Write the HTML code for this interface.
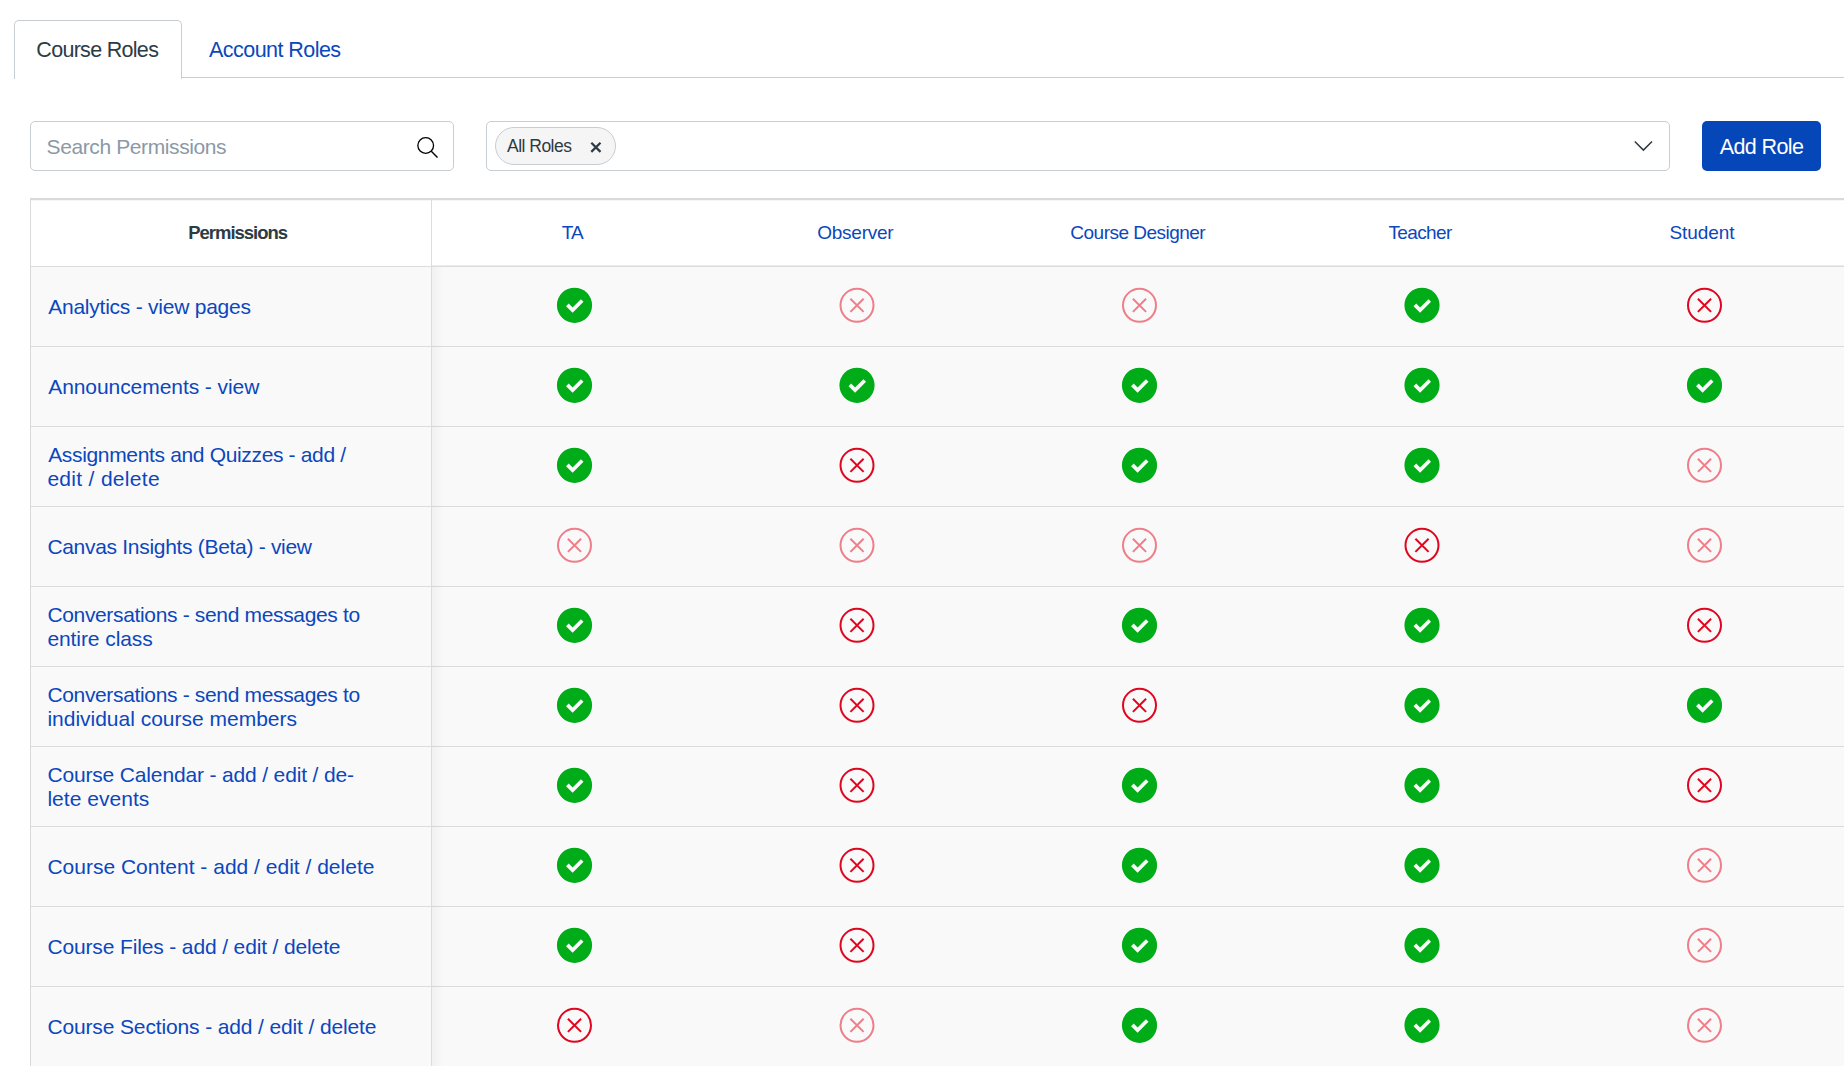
<!DOCTYPE html><html><head><meta charset="utf-8"><style>
*{box-sizing:border-box;margin:0;padding:0}
html,body{width:1844px;height:1066px;overflow:hidden;background:#fff}
body{font-family:"Liberation Sans",sans-serif;color:#2d3b45;position:relative}
.abs{position:absolute}
.tabline{left:181px;top:77px;width:1663px;height:1px;background:#c7cdd1}
.tab{left:14px;top:20px;width:168px;height:59px;border:1px solid #c7cdd1;border-bottom:none;border-radius:5px 5px 0 0;background:#fff}
.t{position:absolute;white-space:nowrap;line-height:1}
.blue{color:#0b47bd}
.box{border:1px solid #c7cdd1;border-radius:5px;background:#fff}
.tag{left:495px;top:127px;width:121px;height:38px;border:1px solid #c7cdd1;border-radius:19px;background:#f5f5f5}
.btn{left:1702px;top:121px;width:119px;height:50px;border-radius:5px;background:#0546b8}
.tbl-top{left:30px;top:198px;width:1814px;height:2px;background:#dadada}
.tbl-sh{left:31px;top:200px;width:1813px;height:1px;background:#f6f6f6}
.tbl-left{left:30px;top:198px;width:1px;height:868px;background:#d9d9d9}
.hdr{left:31px;top:200px;width:1813px;height:66px;background:#fff}
.body{left:31px;top:266px;width:1813px;height:800px;background:#f9f9f9}
.hline{left:31px;width:1813px;height:1px;background:#dcdcdc}
.vsep{left:431px;top:200px;width:1px;height:866px;background:#dcdcdc}
.shadow{left:432px;top:267px;width:12px;height:799px;background:linear-gradient(to right,rgba(0,0,0,0.035),rgba(0,0,0,0))}
.ic{position:absolute}
.dark{color:#e0061f}
.light{color:#ee7f8a}
</style></head><body>
<div class="abs tabline"></div><div class="abs tab"></div>
<div id="t1" class="t " style="left:36.32px;top:40.44px;font-size:21.5px;letter-spacing:-0.698px;">Course Roles</div>
<div id="t2" class="t blue" style="left:209.06px;top:40.44px;font-size:21.5px;letter-spacing:-0.547px;">Account Roles</div>
<div class="abs box" style="left:30px;top:121px;width:424px;height:50px"></div>
<div id="t3" class="t " style="left:46.58px;top:136.40px;font-size:21px;letter-spacing:-0.395px;color:#8b99a6">Search Permissions</div>
<svg class="abs" style="left:410px;top:130px" width="32" height="32" viewBox="0 0 32 32"><circle cx="15.7" cy="15.5" r="7.85" fill="none" stroke="#000" stroke-width="1.3"/><path d="M21.3 21.3 L27.5 27.5" stroke="#000" stroke-width="1.4"/></svg>
<div class="abs box" style="left:486px;top:121px;width:1184px;height:50px"></div>
<div class="abs tag"></div>
<div id="t4" class="t " style="left:507.06px;top:138.06px;font-size:17.5px;letter-spacing:-0.520px;">All Roles</div>
<svg class="abs" style="left:586px;top:137px" width="20" height="20" viewBox="0 0 20 20"><path d="M5.3 5.7 L14.5 14.9 M14.5 5.7 L5.3 14.9" stroke="#2d3b45" stroke-width="2.2"/></svg>
<svg class="abs" style="left:1628px;top:134px" width="30" height="24" viewBox="0 0 30 24"><path d="M6.8 7.5 L15.4 16.1 L24.0 7.5" fill="none" stroke="#2d3b45" stroke-width="1.5"/></svg>
<div class="abs btn"></div>
<div id="t5" class="t " style="left:1719.68px;top:136.64px;font-size:21.5px;letter-spacing:-0.594px;color:#fff">Add Role</div>
<div class="abs hdr"></div><div class="abs body"></div>
<div class="abs tbl-top"></div><div class="abs tbl-sh"></div><div class="abs tbl-left"></div>
<div class="abs hline" style="top:266px"></div>
<div class="abs" style="left:432px;top:265px;width:1412px;height:1px;background:#ececec"></div>
<div class="abs hline" style="top:346px"></div>
<div class="abs hline" style="top:426px"></div>
<div class="abs hline" style="top:506px"></div>
<div class="abs hline" style="top:586px"></div>
<div class="abs hline" style="top:666px"></div>
<div class="abs hline" style="top:746px"></div>
<div class="abs hline" style="top:826px"></div>
<div class="abs hline" style="top:906px"></div>
<div class="abs hline" style="top:986px"></div>
<div class="abs vsep"></div><div class="abs shadow"></div>
<div id="t6" class="t " style="left:188.32px;top:223.66px;font-size:18.5px;letter-spacing:-1.040px;font-weight:bold">Permissions</div>
<div id="t7" class="t blue" style="left:561.82px;top:223.31px;font-size:19px;letter-spacing:-0.960px;">TA</div>
<div id="t8" class="t blue" style="left:817.32px;top:223.31px;font-size:19px;letter-spacing:-0.274px;">Observer</div>
<div id="t9" class="t blue" style="left:1070.32px;top:223.31px;font-size:19px;letter-spacing:-0.514px;">Course Designer</div>
<div id="t10" class="t blue" style="left:1388.50px;top:223.31px;font-size:19px;letter-spacing:-0.640px;">Teacher</div>
<div id="t11" class="t blue" style="left:1669.52px;top:223.31px;font-size:19px;letter-spacing:-0.080px;">Student</div>
<div id="t12" class="t blue" style="left:48.19px;top:296.00px;font-size:21px;letter-spacing:-0.236px;">Analytics - view pages</div>
<svg class="ic" style="left:554px;top:285px" width="40" height="40"><circle cx="20.50" cy="20.30" r="18.3" fill="#fff"/><circle cx="20.50" cy="20.30" r="17.6" fill="#00ac18"/><path d="M13.35 19.86 L18.60 25.10 L28.23 15.50" fill="none" stroke="#f9f9f9" stroke-width="3.7" stroke-linejoin="miter"/></svg>
<svg class="ic light" style="left:837px;top:285px" width="40" height="40"><circle cx="20.00" cy="20.30" r="16.5" fill="none" stroke="currentColor" stroke-width="2"/><path d="M13.40 13.70 L26.60 26.90 M26.60 13.70 L13.40 26.90" stroke="currentColor" stroke-width="2" fill="none"/></svg>
<svg class="ic light" style="left:1119px;top:285px" width="40" height="40"><circle cx="20.50" cy="20.30" r="16.5" fill="none" stroke="currentColor" stroke-width="2"/><path d="M13.90 13.70 L27.10 26.90 M27.10 13.70 L13.90 26.90" stroke="currentColor" stroke-width="2" fill="none"/></svg>
<svg class="ic" style="left:1402px;top:285px" width="40" height="40"><circle cx="20.00" cy="20.30" r="18.3" fill="#fff"/><circle cx="20.00" cy="20.30" r="17.6" fill="#00ac18"/><path d="M12.85 19.86 L18.10 25.10 L27.73 15.50" fill="none" stroke="#f9f9f9" stroke-width="3.7" stroke-linejoin="miter"/></svg>
<svg class="ic dark" style="left:1684px;top:285px" width="40" height="40"><circle cx="20.50" cy="20.30" r="16.5" fill="none" stroke="currentColor" stroke-width="2"/><path d="M13.90 13.70 L27.10 26.90 M27.10 13.70 L13.90 26.90" stroke="currentColor" stroke-width="2" fill="none"/></svg>
<div id="t13" class="t blue" style="left:48.19px;top:376.00px;font-size:21px;letter-spacing:-0.067px;">Announcements - view</div>
<svg class="ic" style="left:554px;top:365px" width="40" height="40"><circle cx="20.50" cy="20.30" r="18.3" fill="#fff"/><circle cx="20.50" cy="20.30" r="17.6" fill="#00ac18"/><path d="M13.35 19.86 L18.60 25.10 L28.23 15.50" fill="none" stroke="#f9f9f9" stroke-width="3.7" stroke-linejoin="miter"/></svg>
<svg class="ic" style="left:837px;top:365px" width="40" height="40"><circle cx="20.00" cy="20.30" r="18.3" fill="#fff"/><circle cx="20.00" cy="20.30" r="17.6" fill="#00ac18"/><path d="M12.85 19.86 L18.10 25.10 L27.73 15.50" fill="none" stroke="#f9f9f9" stroke-width="3.7" stroke-linejoin="miter"/></svg>
<svg class="ic" style="left:1119px;top:365px" width="40" height="40"><circle cx="20.50" cy="20.30" r="18.3" fill="#fff"/><circle cx="20.50" cy="20.30" r="17.6" fill="#00ac18"/><path d="M13.35 19.86 L18.60 25.10 L28.23 15.50" fill="none" stroke="#f9f9f9" stroke-width="3.7" stroke-linejoin="miter"/></svg>
<svg class="ic" style="left:1402px;top:365px" width="40" height="40"><circle cx="20.00" cy="20.30" r="18.3" fill="#fff"/><circle cx="20.00" cy="20.30" r="17.6" fill="#00ac18"/><path d="M12.85 19.86 L18.10 25.10 L27.73 15.50" fill="none" stroke="#f9f9f9" stroke-width="3.7" stroke-linejoin="miter"/></svg>
<svg class="ic" style="left:1684px;top:365px" width="40" height="40"><circle cx="20.50" cy="20.30" r="18.3" fill="#fff"/><circle cx="20.50" cy="20.30" r="17.6" fill="#00ac18"/><path d="M13.35 19.86 L18.60 25.10 L28.23 15.50" fill="none" stroke="#f9f9f9" stroke-width="3.7" stroke-linejoin="miter"/></svg>
<div id="t14" class="t blue" style="left:48.19px;top:444.00px;font-size:21px;letter-spacing:-0.341px;">Assignments and Quizzes - add /</div>
<div id="t15" class="t blue" style="left:47.39px;top:467.89px;font-size:21px;letter-spacing:0.307px;">edit / delete</div>
<svg class="ic" style="left:554px;top:445px" width="40" height="40"><circle cx="20.50" cy="20.30" r="18.3" fill="#fff"/><circle cx="20.50" cy="20.30" r="17.6" fill="#00ac18"/><path d="M13.35 19.86 L18.60 25.10 L28.23 15.50" fill="none" stroke="#f9f9f9" stroke-width="3.7" stroke-linejoin="miter"/></svg>
<svg class="ic dark" style="left:837px;top:445px" width="40" height="40"><circle cx="20.00" cy="20.30" r="16.5" fill="none" stroke="currentColor" stroke-width="2"/><path d="M13.40 13.70 L26.60 26.90 M26.60 13.70 L13.40 26.90" stroke="currentColor" stroke-width="2" fill="none"/></svg>
<svg class="ic" style="left:1119px;top:445px" width="40" height="40"><circle cx="20.50" cy="20.30" r="18.3" fill="#fff"/><circle cx="20.50" cy="20.30" r="17.6" fill="#00ac18"/><path d="M13.35 19.86 L18.60 25.10 L28.23 15.50" fill="none" stroke="#f9f9f9" stroke-width="3.7" stroke-linejoin="miter"/></svg>
<svg class="ic" style="left:1402px;top:445px" width="40" height="40"><circle cx="20.00" cy="20.30" r="18.3" fill="#fff"/><circle cx="20.00" cy="20.30" r="17.6" fill="#00ac18"/><path d="M12.85 19.86 L18.10 25.10 L27.73 15.50" fill="none" stroke="#f9f9f9" stroke-width="3.7" stroke-linejoin="miter"/></svg>
<svg class="ic light" style="left:1684px;top:445px" width="40" height="40"><circle cx="20.50" cy="20.30" r="16.5" fill="none" stroke="currentColor" stroke-width="2"/><path d="M13.90 13.70 L27.10 26.90 M27.10 13.70 L13.90 26.90" stroke="currentColor" stroke-width="2" fill="none"/></svg>
<div id="t16" class="t blue" style="left:47.39px;top:536.00px;font-size:21px;letter-spacing:-0.303px;">Canvas Insights (Beta) - view</div>
<svg class="ic light" style="left:554px;top:525px" width="40" height="40"><circle cx="20.50" cy="20.30" r="16.5" fill="none" stroke="currentColor" stroke-width="2"/><path d="M13.90 13.70 L27.10 26.90 M27.10 13.70 L13.90 26.90" stroke="currentColor" stroke-width="2" fill="none"/></svg>
<svg class="ic light" style="left:837px;top:525px" width="40" height="40"><circle cx="20.00" cy="20.30" r="16.5" fill="none" stroke="currentColor" stroke-width="2"/><path d="M13.40 13.70 L26.60 26.90 M26.60 13.70 L13.40 26.90" stroke="currentColor" stroke-width="2" fill="none"/></svg>
<svg class="ic light" style="left:1119px;top:525px" width="40" height="40"><circle cx="20.50" cy="20.30" r="16.5" fill="none" stroke="currentColor" stroke-width="2"/><path d="M13.90 13.70 L27.10 26.90 M27.10 13.70 L13.90 26.90" stroke="currentColor" stroke-width="2" fill="none"/></svg>
<svg class="ic dark" style="left:1402px;top:525px" width="40" height="40"><circle cx="20.00" cy="20.30" r="16.5" fill="none" stroke="currentColor" stroke-width="2"/><path d="M13.40 13.70 L26.60 26.90 M26.60 13.70 L13.40 26.90" stroke="currentColor" stroke-width="2" fill="none"/></svg>
<svg class="ic light" style="left:1684px;top:525px" width="40" height="40"><circle cx="20.50" cy="20.30" r="16.5" fill="none" stroke="currentColor" stroke-width="2"/><path d="M13.90 13.70 L27.10 26.90 M27.10 13.70 L13.90 26.90" stroke="currentColor" stroke-width="2" fill="none"/></svg>
<div id="t17" class="t blue" style="left:47.39px;top:604.00px;font-size:21px;letter-spacing:-0.341px;">Conversations - send messages to</div>
<div id="t18" class="t blue" style="left:47.39px;top:627.89px;font-size:21px;letter-spacing:-0.073px;">entire class</div>
<svg class="ic" style="left:554px;top:605px" width="40" height="40"><circle cx="20.50" cy="20.30" r="18.3" fill="#fff"/><circle cx="20.50" cy="20.30" r="17.6" fill="#00ac18"/><path d="M13.35 19.86 L18.60 25.10 L28.23 15.50" fill="none" stroke="#f9f9f9" stroke-width="3.7" stroke-linejoin="miter"/></svg>
<svg class="ic dark" style="left:837px;top:605px" width="40" height="40"><circle cx="20.00" cy="20.30" r="16.5" fill="none" stroke="currentColor" stroke-width="2"/><path d="M13.40 13.70 L26.60 26.90 M26.60 13.70 L13.40 26.90" stroke="currentColor" stroke-width="2" fill="none"/></svg>
<svg class="ic" style="left:1119px;top:605px" width="40" height="40"><circle cx="20.50" cy="20.30" r="18.3" fill="#fff"/><circle cx="20.50" cy="20.30" r="17.6" fill="#00ac18"/><path d="M13.35 19.86 L18.60 25.10 L28.23 15.50" fill="none" stroke="#f9f9f9" stroke-width="3.7" stroke-linejoin="miter"/></svg>
<svg class="ic" style="left:1402px;top:605px" width="40" height="40"><circle cx="20.00" cy="20.30" r="18.3" fill="#fff"/><circle cx="20.00" cy="20.30" r="17.6" fill="#00ac18"/><path d="M12.85 19.86 L18.10 25.10 L27.73 15.50" fill="none" stroke="#f9f9f9" stroke-width="3.7" stroke-linejoin="miter"/></svg>
<svg class="ic dark" style="left:1684px;top:605px" width="40" height="40"><circle cx="20.50" cy="20.30" r="16.5" fill="none" stroke="currentColor" stroke-width="2"/><path d="M13.90 13.70 L27.10 26.90 M27.10 13.70 L13.90 26.90" stroke="currentColor" stroke-width="2" fill="none"/></svg>
<div id="t19" class="t blue" style="left:47.39px;top:684.00px;font-size:21px;letter-spacing:-0.341px;">Conversations - send messages to</div>
<div id="t20" class="t blue" style="left:47.39px;top:707.89px;font-size:21px;letter-spacing:-0.007px;">individual course members</div>
<svg class="ic" style="left:554px;top:685px" width="40" height="40"><circle cx="20.50" cy="20.30" r="18.3" fill="#fff"/><circle cx="20.50" cy="20.30" r="17.6" fill="#00ac18"/><path d="M13.35 19.86 L18.60 25.10 L28.23 15.50" fill="none" stroke="#f9f9f9" stroke-width="3.7" stroke-linejoin="miter"/></svg>
<svg class="ic dark" style="left:837px;top:685px" width="40" height="40"><circle cx="20.00" cy="20.30" r="16.5" fill="none" stroke="currentColor" stroke-width="2"/><path d="M13.40 13.70 L26.60 26.90 M26.60 13.70 L13.40 26.90" stroke="currentColor" stroke-width="2" fill="none"/></svg>
<svg class="ic dark" style="left:1119px;top:685px" width="40" height="40"><circle cx="20.50" cy="20.30" r="16.5" fill="none" stroke="currentColor" stroke-width="2"/><path d="M13.90 13.70 L27.10 26.90 M27.10 13.70 L13.90 26.90" stroke="currentColor" stroke-width="2" fill="none"/></svg>
<svg class="ic" style="left:1402px;top:685px" width="40" height="40"><circle cx="20.00" cy="20.30" r="18.3" fill="#fff"/><circle cx="20.00" cy="20.30" r="17.6" fill="#00ac18"/><path d="M12.85 19.86 L18.10 25.10 L27.73 15.50" fill="none" stroke="#f9f9f9" stroke-width="3.7" stroke-linejoin="miter"/></svg>
<svg class="ic" style="left:1684px;top:685px" width="40" height="40"><circle cx="20.50" cy="20.30" r="18.3" fill="#fff"/><circle cx="20.50" cy="20.30" r="17.6" fill="#00ac18"/><path d="M13.35 19.86 L18.60 25.10 L28.23 15.50" fill="none" stroke="#f9f9f9" stroke-width="3.7" stroke-linejoin="miter"/></svg>
<div id="t21" class="t blue" style="left:47.39px;top:764.00px;font-size:21px;letter-spacing:-0.155px;">Course Calendar - add / edit / de-</div>
<div id="t22" class="t blue" style="left:47.39px;top:787.89px;font-size:21px;letter-spacing:0.032px;">lete events</div>
<svg class="ic" style="left:554px;top:765px" width="40" height="40"><circle cx="20.50" cy="20.30" r="18.3" fill="#fff"/><circle cx="20.50" cy="20.30" r="17.6" fill="#00ac18"/><path d="M13.35 19.86 L18.60 25.10 L28.23 15.50" fill="none" stroke="#f9f9f9" stroke-width="3.7" stroke-linejoin="miter"/></svg>
<svg class="ic dark" style="left:837px;top:765px" width="40" height="40"><circle cx="20.00" cy="20.30" r="16.5" fill="none" stroke="currentColor" stroke-width="2"/><path d="M13.40 13.70 L26.60 26.90 M26.60 13.70 L13.40 26.90" stroke="currentColor" stroke-width="2" fill="none"/></svg>
<svg class="ic" style="left:1119px;top:765px" width="40" height="40"><circle cx="20.50" cy="20.30" r="18.3" fill="#fff"/><circle cx="20.50" cy="20.30" r="17.6" fill="#00ac18"/><path d="M13.35 19.86 L18.60 25.10 L28.23 15.50" fill="none" stroke="#f9f9f9" stroke-width="3.7" stroke-linejoin="miter"/></svg>
<svg class="ic" style="left:1402px;top:765px" width="40" height="40"><circle cx="20.00" cy="20.30" r="18.3" fill="#fff"/><circle cx="20.00" cy="20.30" r="17.6" fill="#00ac18"/><path d="M12.85 19.86 L18.10 25.10 L27.73 15.50" fill="none" stroke="#f9f9f9" stroke-width="3.7" stroke-linejoin="miter"/></svg>
<svg class="ic dark" style="left:1684px;top:765px" width="40" height="40"><circle cx="20.50" cy="20.30" r="16.5" fill="none" stroke="currentColor" stroke-width="2"/><path d="M13.90 13.70 L27.10 26.90 M27.10 13.70 L13.90 26.90" stroke="currentColor" stroke-width="2" fill="none"/></svg>
<div id="t23" class="t blue" style="left:47.39px;top:856.00px;font-size:21px;letter-spacing:0.005px;">Course Content - add / edit / delete</div>
<svg class="ic" style="left:554px;top:845px" width="40" height="40"><circle cx="20.50" cy="20.30" r="18.3" fill="#fff"/><circle cx="20.50" cy="20.30" r="17.6" fill="#00ac18"/><path d="M13.35 19.86 L18.60 25.10 L28.23 15.50" fill="none" stroke="#f9f9f9" stroke-width="3.7" stroke-linejoin="miter"/></svg>
<svg class="ic dark" style="left:837px;top:845px" width="40" height="40"><circle cx="20.00" cy="20.30" r="16.5" fill="none" stroke="currentColor" stroke-width="2"/><path d="M13.40 13.70 L26.60 26.90 M26.60 13.70 L13.40 26.90" stroke="currentColor" stroke-width="2" fill="none"/></svg>
<svg class="ic" style="left:1119px;top:845px" width="40" height="40"><circle cx="20.50" cy="20.30" r="18.3" fill="#fff"/><circle cx="20.50" cy="20.30" r="17.6" fill="#00ac18"/><path d="M13.35 19.86 L18.60 25.10 L28.23 15.50" fill="none" stroke="#f9f9f9" stroke-width="3.7" stroke-linejoin="miter"/></svg>
<svg class="ic" style="left:1402px;top:845px" width="40" height="40"><circle cx="20.00" cy="20.30" r="18.3" fill="#fff"/><circle cx="20.00" cy="20.30" r="17.6" fill="#00ac18"/><path d="M12.85 19.86 L18.10 25.10 L27.73 15.50" fill="none" stroke="#f9f9f9" stroke-width="3.7" stroke-linejoin="miter"/></svg>
<svg class="ic light" style="left:1684px;top:845px" width="40" height="40"><circle cx="20.50" cy="20.30" r="16.5" fill="none" stroke="currentColor" stroke-width="2"/><path d="M13.90 13.70 L27.10 26.90 M27.10 13.70 L13.90 26.90" stroke="currentColor" stroke-width="2" fill="none"/></svg>
<div id="t24" class="t blue" style="left:47.39px;top:936.00px;font-size:21px;letter-spacing:-0.136px;">Course Files - add / edit / delete</div>
<svg class="ic" style="left:554px;top:925px" width="40" height="40"><circle cx="20.50" cy="20.30" r="18.3" fill="#fff"/><circle cx="20.50" cy="20.30" r="17.6" fill="#00ac18"/><path d="M13.35 19.86 L18.60 25.10 L28.23 15.50" fill="none" stroke="#f9f9f9" stroke-width="3.7" stroke-linejoin="miter"/></svg>
<svg class="ic dark" style="left:837px;top:925px" width="40" height="40"><circle cx="20.00" cy="20.30" r="16.5" fill="none" stroke="currentColor" stroke-width="2"/><path d="M13.40 13.70 L26.60 26.90 M26.60 13.70 L13.40 26.90" stroke="currentColor" stroke-width="2" fill="none"/></svg>
<svg class="ic" style="left:1119px;top:925px" width="40" height="40"><circle cx="20.50" cy="20.30" r="18.3" fill="#fff"/><circle cx="20.50" cy="20.30" r="17.6" fill="#00ac18"/><path d="M13.35 19.86 L18.60 25.10 L28.23 15.50" fill="none" stroke="#f9f9f9" stroke-width="3.7" stroke-linejoin="miter"/></svg>
<svg class="ic" style="left:1402px;top:925px" width="40" height="40"><circle cx="20.00" cy="20.30" r="18.3" fill="#fff"/><circle cx="20.00" cy="20.30" r="17.6" fill="#00ac18"/><path d="M12.85 19.86 L18.10 25.10 L27.73 15.50" fill="none" stroke="#f9f9f9" stroke-width="3.7" stroke-linejoin="miter"/></svg>
<svg class="ic light" style="left:1684px;top:925px" width="40" height="40"><circle cx="20.50" cy="20.30" r="16.5" fill="none" stroke="currentColor" stroke-width="2"/><path d="M13.90 13.70 L27.10 26.90 M27.10 13.70 L13.90 26.90" stroke="currentColor" stroke-width="2" fill="none"/></svg>
<div id="t25" class="t blue" style="left:47.39px;top:1016.00px;font-size:21px;letter-spacing:-0.133px;">Course Sections - add / edit / delete</div>
<svg class="ic dark" style="left:554px;top:1005px" width="40" height="40"><circle cx="20.50" cy="20.30" r="16.5" fill="none" stroke="currentColor" stroke-width="2"/><path d="M13.90 13.70 L27.10 26.90 M27.10 13.70 L13.90 26.90" stroke="currentColor" stroke-width="2" fill="none"/></svg>
<svg class="ic light" style="left:837px;top:1005px" width="40" height="40"><circle cx="20.00" cy="20.30" r="16.5" fill="none" stroke="currentColor" stroke-width="2"/><path d="M13.40 13.70 L26.60 26.90 M26.60 13.70 L13.40 26.90" stroke="currentColor" stroke-width="2" fill="none"/></svg>
<svg class="ic" style="left:1119px;top:1005px" width="40" height="40"><circle cx="20.50" cy="20.30" r="18.3" fill="#fff"/><circle cx="20.50" cy="20.30" r="17.6" fill="#00ac18"/><path d="M13.35 19.86 L18.60 25.10 L28.23 15.50" fill="none" stroke="#f9f9f9" stroke-width="3.7" stroke-linejoin="miter"/></svg>
<svg class="ic" style="left:1402px;top:1005px" width="40" height="40"><circle cx="20.00" cy="20.30" r="18.3" fill="#fff"/><circle cx="20.00" cy="20.30" r="17.6" fill="#00ac18"/><path d="M12.85 19.86 L18.10 25.10 L27.73 15.50" fill="none" stroke="#f9f9f9" stroke-width="3.7" stroke-linejoin="miter"/></svg>
<svg class="ic light" style="left:1684px;top:1005px" width="40" height="40"><circle cx="20.50" cy="20.30" r="16.5" fill="none" stroke="currentColor" stroke-width="2"/><path d="M13.90 13.70 L27.10 26.90 M27.10 13.70 L13.90 26.90" stroke="currentColor" stroke-width="2" fill="none"/></svg>
</body></html>
